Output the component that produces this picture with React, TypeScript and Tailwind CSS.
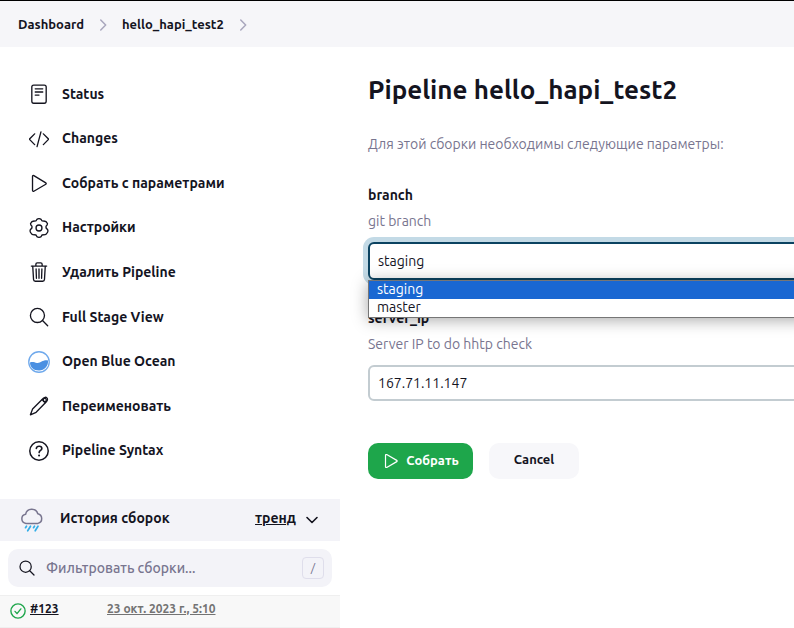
import type { ReactNode } from "react";

function Icon({ children, className = "size-5" }: { children: ReactNode; className?: string }) {
  return (
    <svg
      viewBox="0 0 512 512"
      className={className}
      fill="none"
      stroke="currentColor"
      strokeWidth="34"
      strokeLinecap="round"
      strokeLinejoin="round"
      aria-hidden="true"
    >
      {children}
    </svg>
  );
}

function SearchIcon() {
  return (
    <Icon>
      <circle cx="216" cy="216" r="180" />
      <path d="M346 346l132 132" />
    </Icon>
  );
}

function Chevron() {
  return (
    <Icon className="size-3 text-[#a9a7bd]">
      <path strokeWidth="64" d="M160 40l210 216-210 216" />
    </Icon>
  );
}

const tasks: { label: string; icon: ReactNode }[] = [
  {
    label: "Status",
    icon: (
      <Icon>
        <rect x="72" y="28" width="368" height="464" rx="48" />
        <path d="M160 124h192M160 204h192M160 284h96" />
      </Icon>
    ),
  },
  {
    label: "Changes",
    icon: (
      <Icon>
        <path d="M144 124L8 262l136 138M368 124l136 138-136 138M306 72L206 452" />
      </Icon>
    ),
  },
  {
    label: "Собрать с параметрами",
    icon: (
      <Icon>
        <path d="M90 88v356c0 20 18 32 34 22l306-178c14-8 14-28 0-36L124 66c-16-10-34 2-34 22z" />
      </Icon>
    ),
  },
  {
    label: "Настройки",
    icon: (
      <Icon>
        <circle cx="256" cy="256" r="76" />
        <path d="M202 34 Q256 0 310 34 Q326 90 382 76 Q446 80 472 142 Q474 176 440 204 Q422 256 464 284 Q500 320 472 372 Q444 432 382 432 Q326 420 310 478 Q256 512 202 478 Q186 420 130 432 Q68 432 40 372 Q12 320 48 284 Q90 256 72 204 Q38 176 40 142 Q66 80 130 76 Q186 90 202 34z" />
      </Icon>
    ),
  },
  {
    label: "Удалить Pipeline",
    icon: (
      <Icon>
        <path d="M96 112l20 336c2 28 18 44 44 44h192c26 0 42-16 44-44l20-336" />
        <path d="M60 104h392M176 104V56c0-22 14-34 34-34h92c20 0 34 12 34 34v48M256 180v236M182 180l8 236M330 180l-8 236" />
      </Icon>
    ),
  },
  { label: "Full Stage View", icon: <SearchIcon /> },
  {
    label: "Open Blue Ocean",
    icon: (
      <svg viewBox="0 0 44 44" className="size-[22px] shrink-0" aria-hidden="true">
        <circle cx="22" cy="22" r="20.500" fill="#fff" stroke="#6fa9ec" strokeWidth="2.600" />
        <path d="M4 23c5-2 9 0 14 1 8 1 11-7 22-5 1 11-7 20-18 20S4 32 4 23z" fill="#4a90e2" />
      </svg>
    ),
  },
  {
    label: "Переименовать",
    icon: (
      <Icon>
        <path d="M360 64c32-36 74-40 98-16s20 66-14 98L182 418 36 482l56-148z" />
        <path d="M340 90c18 40 42 64 82 78" />
        <circle cx="404" cy="100" r="40" />
      </Icon>
    ),
  },
  {
    label: "Pipeline Syntax",
    icon: (
      <Icon>
        <circle cx="256" cy="256" r="236" strokeWidth="38" />
        <path strokeWidth="42" d="M188 190c8-76 140-76 140 0 0 54-68 48-68 106" />
        <circle cx="258" cy="372" r="14" strokeWidth="26" />
      </Icon>
    ),
  },
];

function SidePanel() {
  return (
    <aside className="w-[340px] shrink-0">
      <nav className="mt-[25px] grid h-[401px] auto-rows-fr">
        {tasks.map((task) => (
          <a key={task.label} href="#" className="flex items-center gap-3 pl-7 text-sm font-semibold">
            <span className="flex w-[22px] justify-center">{task.icon}</span>
            <span className="pb-px">{task.label}</span>
          </a>
        ))}
      </nav>

      <section className="mt-[26px]">
        <header className="flex h-[42px] items-center bg-[#f3f3f8] px-5 font-bold">
          <svg viewBox="0 0 24 24" className="size-6 shrink-0" fill="none" strokeLinecap="round" aria-hidden="true">
            <path d="M6 16.200a4.600 4.600 0 0 1-.4-9.100A6.300 6.300 0 0 1 17.800 6.500 5 5 0 0 1 18 16.200z" transform="translate(0 -.8)" stroke="#78758f" strokeWidth="1.500" strokeLinejoin="round" />
            <path d="M6.500 18.200l-1 1.500M10.500 18.200l-2.800 4.600M14.500 18.200l-1 1.500M18 18.200l-2.800 4.600" stroke="#33aee8" strokeWidth="1.700" />
          </svg>
          <h2 className="ml-4 pb-1 text-sm">История сборок</h2>
          <a href="#" className="ml-auto pb-1 text-sm underline">тренд</a>
          <button type="button" aria-label="Свернуть" className="ml-2">
            <Icon className="size-4"><path strokeWidth="52" d="M96 176l160 160 160-160" /></Icon>
          </button>
        </header>
        <div className="p-2">
          <label className="flex h-[38px] items-center gap-2 rounded-[10px] bg-[#f3f3f8] px-2">
            <span className="flex w-[22px] justify-center">
              <Icon className="size-4">
                <circle cx="212" cy="212" r="180" strokeWidth="40" />
                <path strokeWidth="40" d="M342 342l138 138" />
              </Icon>
            </span>
            <input
              type="text"
              aria-label="Фильтровать сборки"
              placeholder="Фильтровать сборки..."
              className="min-w-0 flex-1 bg-transparent text-sm font-medium outline-none placeholder:text-[#78758f]"
            />
            <kbd className="flex size-[22px] items-center justify-center rounded-[4px] border border-[#dfdeeb] font-[inherit] text-xs text-[#78758f]">/</kbd>
          </label>
        </div>
        <div className="flex h-[33px] items-center border-y border-[#efefef] bg-[#f8f8f8] pb-1.5 pl-2.5 text-xs font-bold">
          <Icon className="mt-1 size-4 text-[#1ea64b]">
            <circle cx="256" cy="256" r="228" strokeWidth="44" />
            <path strokeWidth="44" d="M160 268l64 72 124-152" />
          </Icon>
          <a href="#" className="ml-1 w-[77px] underline">#123</a>
          <a href="#" className="text-[#737373] underline">23 окт. 2023 г., 5:10</a>
        </div>
      </section>
    </aside>
  );
}

export default function App() {
  return (
    <div className="min-h-screen overflow-hidden bg-white font-[Ubuntu,'Open_Sans','Noto_Sans',sans-serif] text-[#14141f]">
      <nav className="flex h-[47px] items-center border-t border-black bg-[#f6f6f9] pt-px pl-[18px] text-[13px] font-semibold">
        <a href="#">Dashboard</a>
        <span className="mx-[13px]"><Chevron /></span>
        <a href="#">hello_hapi_test2</a>
        <span className="mx-[13px]"><Chevron /></span>
      </nav>
      <div className="flex">
        <SidePanel />
        <main className="-mr-4 min-w-0 flex-1 pl-7">
          <h1 className="mt-6 text-[26px] leading-[38px] font-bold">Pipeline hello_hapi_test2</h1>
          <p className="mt-[23px] text-sm leading-6 whitespace-nowrap text-[#78758f]">Для этой сборки необходимы следующие параметры:</p>
          <form>
            <label htmlFor="branch" className="mt-[27px] block text-sm leading-6 font-semibold">branch</label>
            <p className="text-sm leading-7 text-[#78758f]">git branch</p>
            <div className="relative mt-[7px]">
              <select
                id="branch"
                defaultValue="staging"
                className="block h-[38px] w-full appearance-none rounded-md border-2 border-[#0b4361] bg-white px-2 text-sm shadow-[0_0_0_5px_#c3dae6] outline-none"
              >
                <option>staging</option>
                <option>master</option>
              </select>
              <ul role="listbox" className="absolute inset-x-0 top-full z-10 border border-[#767676] bg-white text-sm leading-4 shadow-[0_2px_16px_rgba(0,0,0,0.35)]">
                <li role="option" aria-selected="true" className="bg-[#1967d2] px-2 pb-0.5 text-white">staging</li>
                <li role="option" aria-selected="false" className="px-2 pb-0.5">master</li>
              </ul>
            </div>
            <label htmlFor="server_ip" className="mt-[26px] block text-sm leading-6 font-semibold">server_ip</label>
            <p className="text-sm leading-7 text-[#78758f]">Server IP to do hhtp check</p>
            <input
              id="server_ip"
              type="text"
              defaultValue="167.71.11.147"
              className="mt-[7px] block h-9 w-full rounded-md border-2 border-[#c3ccd1] bg-white px-2 text-sm outline-none"
            />
            <div className="mt-[42px] flex gap-4 text-[13px]">
              <button type="submit" className="flex h-9 w-[105px] items-center justify-center gap-1.5 rounded-[10px] bg-[#1ea64b] font-bold text-white">
                <Icon className="size-[18px]">
                  <path d="M100 96v320c0 20 18 30 34 22l286-164c14-8 14-28 0-36L134 74c-16-8-34 2-34 22z" />
                </Icon>
                Собрать
              </button>
              <button type="button" className="h-9 w-[90px] rounded-[10px] bg-[#f7f7fa] pb-0.5 font-semibold">Cancel</button>
            </div>
          </form>
        </main>
      </div>
    </div>
  );
}
